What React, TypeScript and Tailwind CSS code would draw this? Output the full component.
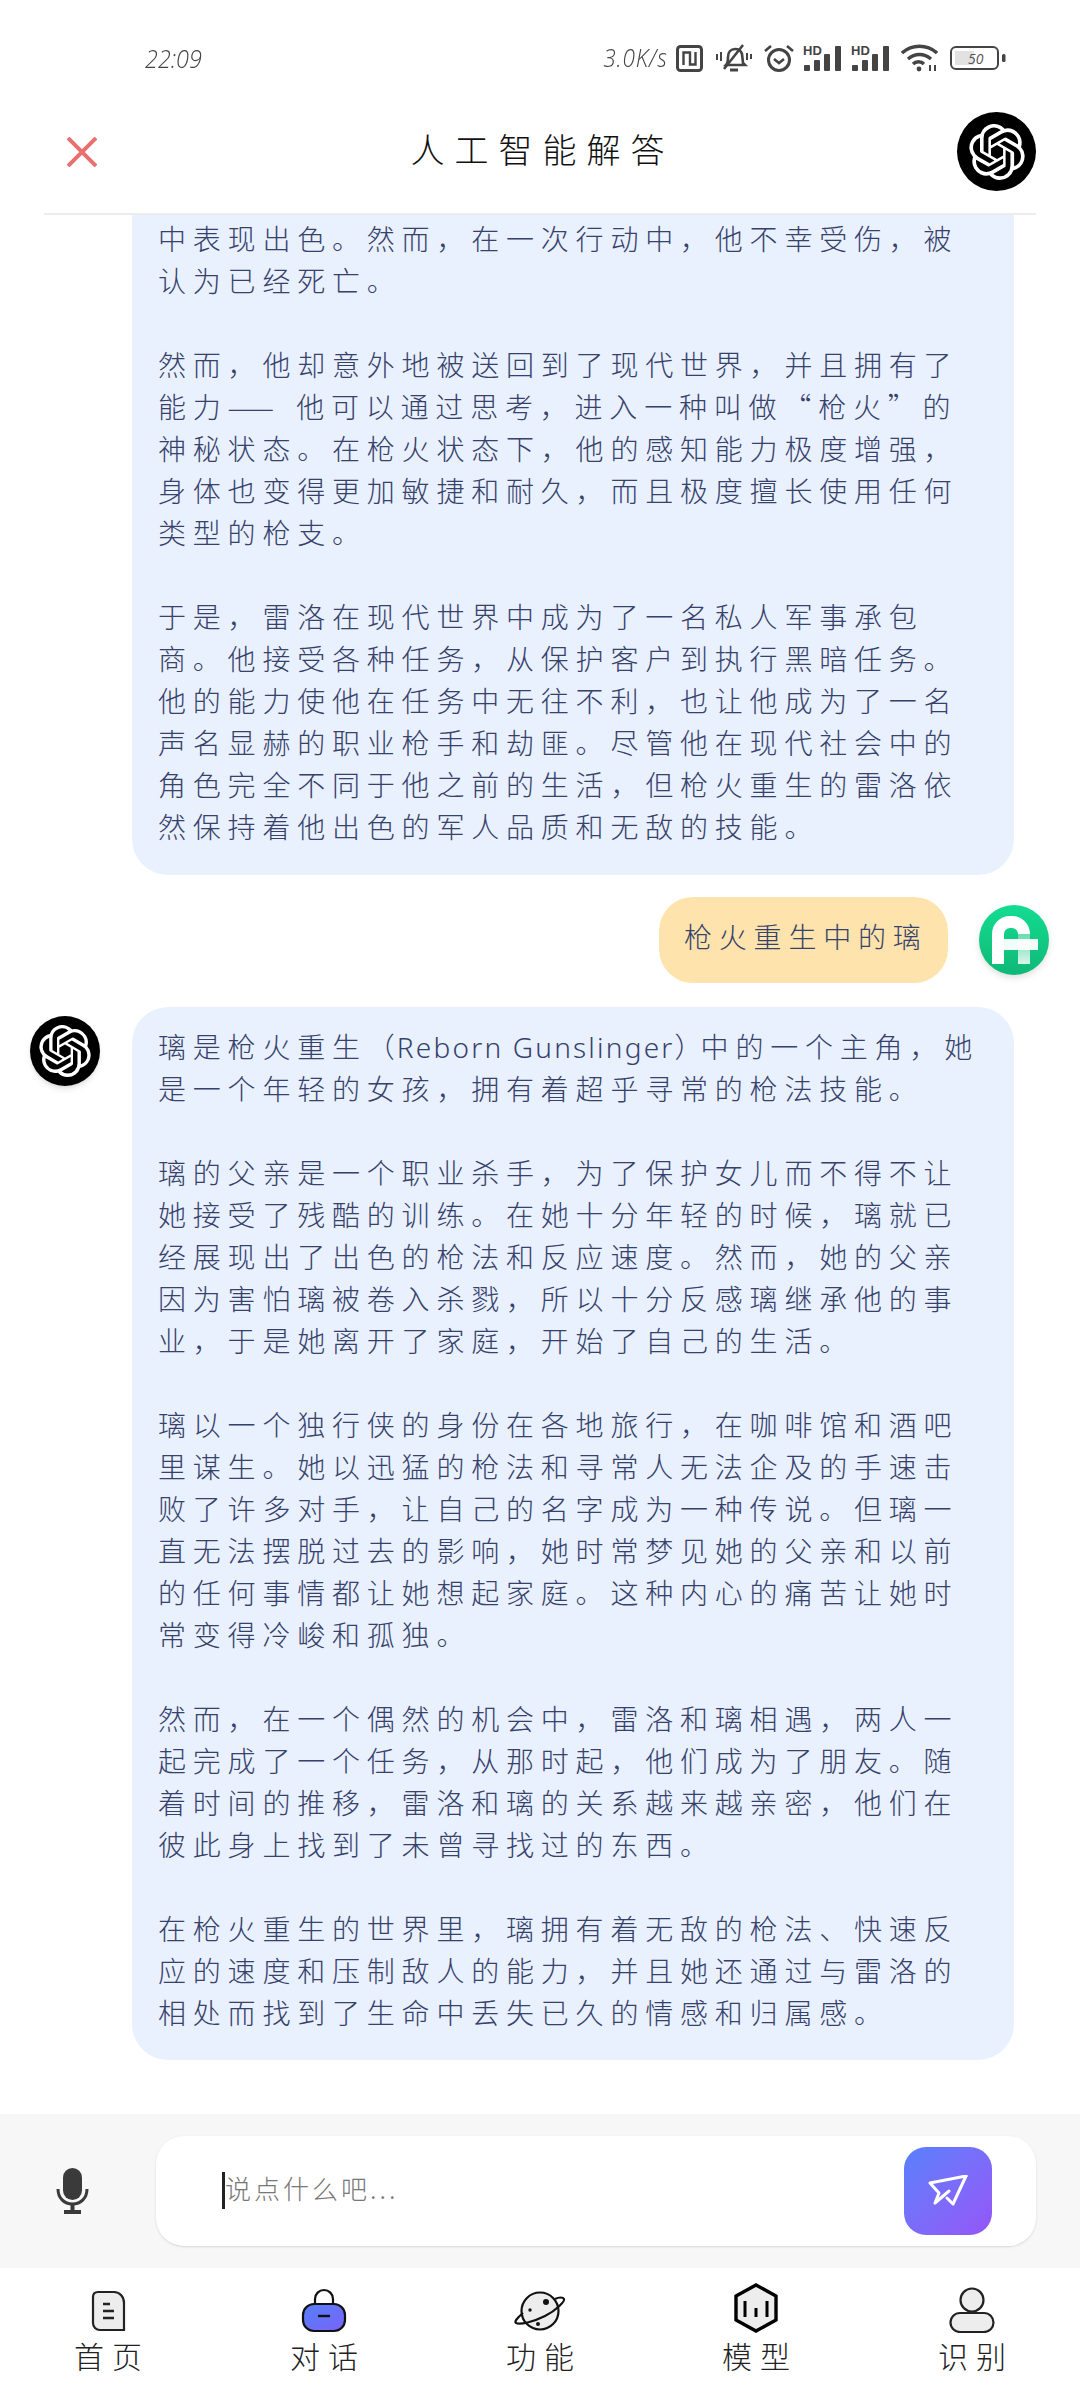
import React from "react";
import { SiOpenai } from "react-icons/si";

const cjk = "font-['Noto_Sans_CJK_SC','Noto_Sans',sans-serif]";

const topLines: React.ReactNode[] = [
  "中表现出色。然而，在一次行动中，他不幸受伤，被",
  "认为已经死亡。",
  "",
  "然而，他却意外地被送回到了现代世界，并且拥有了",
  <>能力<span className="tracking-[22px]">——</span>他可以通过思考，进入一种叫做“枪火”的</>,
  "神秘状态。在枪火状态下，他的感知能力极度增强，",
  "身体也变得更加敏捷和耐久，而且极度擅长使用任何",
  "类型的枪支。",
  "",
  "于是，雷洛在现代世界中成为了一名私人军事承包",
  "商。他接受各种任务，从保护客户到执行黑暗任务。",
  "他的能力使他在任务中无往不利，也让他成为了一名",
  "声名显赫的职业枪手和劫匪。尽管他在现代社会中的",
  "角色完全不同于他之前的生活，但枪火重生的雷洛依",
  "然保持着他出色的军人品质和无敌的技能。",
];

const answerLines: React.ReactNode[] = [
  <>璃是枪火重生<span className="tracking-[2px]">（</span><span className="font-['Noto_Sans',sans-serif] tracking-[2.2px]">Reborn Gunslinger</span><span className="tracking-[-2px]">）</span>中的一个主角，她</>,
  "是一个年轻的女孩，拥有着超乎寻常的枪法技能。",
  "",
  "璃的父亲是一个职业杀手，为了保护女儿而不得不让",
  "她接受了残酷的训练。在她十分年轻的时候，璃就已",
  "经展现出了出色的枪法和反应速度。然而，她的父亲",
  "因为害怕璃被卷入杀戮，所以十分反感璃继承他的事",
  "业，于是她离开了家庭，开始了自己的生活。",
  "",
  "璃以一个独行侠的身份在各地旅行，在咖啡馆和酒吧",
  "里谋生。她以迅猛的枪法和寻常人无法企及的手速击",
  "败了许多对手，让自己的名字成为一种传说。但璃一",
  "直无法摆脱过去的影响，她时常梦见她的父亲和以前",
  "的任何事情都让她想起家庭。这种内心的痛苦让她时",
  "常变得冷峻和孤独。",
  "",
  "然而，在一个偶然的机会中，雷洛和璃相遇，两人一",
  "起完成了一个任务，从那时起，他们成为了朋友。随",
  "着时间的推移，雷洛和璃的关系越来越亲密，他们在",
  "彼此身上找到了未曾寻找过的东西。",
  "",
  "在枪火重生的世界里，璃拥有着无敌的枪法、快速反",
  "应的速度和压制敌人的能力，并且她还通过与雷洛的",
  "相处而找到了生命中丢失已久的情感和归属感。",
];

function Lines({ lines }: { lines: React.ReactNode[] }) {
  return (
    <>
      {lines.map((line, i) => (
        <div key={i} className="h-[42px] whitespace-pre text-[28px] leading-[42px] font-light tracking-[6.8px] text-[#36426b]">
          {line}
        </div>
      ))}
    </>
  );
}

function Signal() {
  return (
    <svg width="40" height="28" viewBox="0 0 40 28" fill="#444">
      <text x="0" y="11" fontSize="13" fontWeight="700" fontFamily="Liberation Sans, sans-serif">HD</text>
      <rect x="1" y="21" width="6" height="6" rx="1" />
      <rect x="11" y="16" width="6" height="11" rx="1" />
      <rect x="21" y="10" width="6" height="17" rx="1" />
      <rect x="32" y="2" width="6" height="25" rx="1" />
    </svg>
  );
}

function StatusBar() {
  return (
    <div className="flex h-[90px] items-center justify-between pt-[26px] pr-[74px] pl-[145px] text-[#444]">
      <span className="origin-left scale-x-[0.9] font-['Open_Sans',sans-serif] text-[26px] font-light italic">22:09</span>
      <div className="flex items-center">
        <span className="mr-[8px] origin-right scale-x-[0.9] font-['Open_Sans',sans-serif] text-[25px] font-light tracking-[1px] whitespace-nowrap italic">3.0K/s</span>
        <svg width="27" height="27" viewBox="0 0 27 27" fill="none" stroke="#444" strokeWidth="3">
          <rect x="1.5" y="1.5" width="24" height="24" rx="3" />
          <path d="M7.5 20V7.5h6.5v12h5.5V7" strokeWidth="2.4" />
        </svg>
        <svg className="ml-[13px]" width="36" height="28" viewBox="0 0 36 28" fill="none" stroke="#444" strokeWidth="2.6">
          <path d="M10 21c2-2 2-4 2-8 0-5 3-8 7-8s6 2 7 5l1 9 2 2H10Z" />
          <path d="M8 25 27 1" />
          <path d="M14 26h8" strokeWidth="3" />
          <path d="M1 10v6M5 8v9M31 9v7M35 10v5" strokeWidth="2" />
        </svg>
        <svg className="ml-[11px]" width="32" height="28" viewBox="0 0 32 28" fill="none" stroke="#444" strokeWidth="3">
          <circle cx="16" cy="16" r="10.5" />
          <path d="M11 15l5 4 5-4" strokeWidth="2.6" />
          <path d="M2 7l6-5M30 7l-6-5" strokeWidth="2.6" />
        </svg>
        <div className="ml-[8px]"><Signal /></div>
        <div className="ml-[8px]"><Signal /></div>
        <svg className="ml-[10px]" width="37" height="28" viewBox="0 0 37 28" fill="none" stroke="#444" strokeWidth="3.4">
          <path d="M1 9c10-9 25-9 35 0" />
          <path d="M7 15c7-6 16-6 23 0" />
          <path d="M12 20c3-3 8-3 11 0" />
          <circle cx="18" cy="25" r="2.4" fill="#444" stroke="none" />
          <path d="M29 21v6M34 21v6" strokeWidth="2" />
        </svg>
        <svg className="ml-[12px]" width="56" height="26" viewBox="0 0 56 26" fill="none">
          <rect x="1" y="2" width="47" height="22" rx="5" stroke="#444" strokeWidth="2" />
          <rect x="5" y="6" width="19" height="14" fill="#e2e2e2" />
          <text x="18" y="19" fontSize="14" fontStyle="italic" fill="#555" fontFamily="Open Sans, sans-serif">50</text>
          <rect x="52" y="9" width="3.5" height="8" rx="1.5" fill="#444" />
        </svg>
      </div>
    </div>
  );
}

function Header() {
  return (
    <div className="mx-[44px] flex h-[125px] items-center justify-between border-b-2 border-[#ececec] pl-[23px]">
      <svg width="30" height="30" viewBox="0 0 30 30" fill="none" stroke="#ea6f6f" strokeWidth="4">
        <path d="M1 1l28 28M29 1 1 29" />
      </svg>
      <div className={`${cjk} ml-[31px] mt-[-6px] text-[34px] font-light tracking-[10px] text-[#111]`}>人工智能解答</div>
      <div className="flex h-[79px] w-[79px] items-center justify-center rounded-full bg-black">
        <SiOpenai className="text-white" size={56} />
      </div>
    </div>
  );
}

function UserAvatar() {
  return (
    <svg className="drop-shadow-md" width="70" height="70" viewBox="0 0 70 70">
      <defs>
        <linearGradient id="green" x1="0" y1="0" x2="0" y2="1">
          <stop offset="0" stopColor="#14dc92" />
          <stop offset="1" stopColor="#0fb877" />
        </linearGradient>
        <linearGradient id="leg" x1="0" y1="0" x2="0" y2="1">
          <stop offset="0" stopColor="#ffffff" stopOpacity="0.35" />
          <stop offset="1" stopColor="#ffffff" stopOpacity="0.85" />
        </linearGradient>
      </defs>
      <circle cx="35" cy="35" r="35" fill="url(#green)" />
      <path d="M19 59V29a12 12 0 0 1 12-12h2a12 12 0 0 1 12 12" fill="none" stroke="#fff" strokeWidth="12" />
      <rect x="39" y="29" width="12" height="30" fill="url(#leg)" />
      <rect x="24" y="34" width="35" height="11" fill="#fff" fillOpacity="0.95" />
    </svg>
  );
}

function Chat() {
  return (
    <div className={`${cjk} flex-1 overflow-hidden`}>
      <div className="mt-[-40px] ml-[132px] w-[882px] rounded-[36px] bg-[#e9f0fe] pt-[42px] pr-[20px] pb-[28px] pl-[26px]">
        <Lines lines={topLines} />
      </div>
      <div className="mt-[22px] flex items-center justify-end pr-[31px]">
        <div className="flex h-[86px] w-[289px] items-center rounded-[34px] bg-[#fee4ac] pb-[8px] pl-[25px]">
          <span className="text-[28px] font-light tracking-[6.8px] whitespace-nowrap text-[#36426b]">枪火重生中的璃</span>
        </div>
        <div className="ml-[31px]"><UserAvatar /></div>
      </div>
      <div className="mt-[24px] flex items-start pl-[30px]">
        <div className="mt-[9px] mr-[32px] flex h-[70px] w-[70px] shrink-0 items-center justify-center rounded-full bg-black shadow-md">
          <SiOpenai className="text-white" size={52} />
        </div>
        <div className="w-[882px] rounded-[36px] bg-[#e9f0fe] pt-[18px] pr-[20px] pb-[27px] pl-[26px]">
          <Lines lines={answerLines} />
        </div>
      </div>
    </div>
  );
}

function InputBar() {
  return (
    <div className="flex h-[154px] items-center bg-[#f7f7f7] pr-[44px] pl-[56px]">
      <svg width="33" height="46" viewBox="0 0 33 46" fill="none">
        <rect x="7" y="0" width="19" height="32" rx="9.5" fill="#3a3a3a" />
        <path d="M2 21c0 9 6 15 14.5 15S31 30 31 21" stroke="#3a3a3a" strokeWidth="3" />
        <path d="M16.5 36v7M8 44h17" stroke="#3a3a3a" strokeWidth="4" />
      </svg>
      <div className="ml-[67px] flex h-[110px] flex-1 items-center rounded-[28px] bg-white pr-[44px] pl-[66px] shadow-sm">
        <div className="mt-[-2px] h-[37px] w-[3px] bg-[#222]" />
        <div className={`${cjk} mt-[-8px] flex-1 text-[26px] font-light tracking-[3px] text-[#777]`}>说点什么吧...</div>
        <button className="flex h-[88px] w-[88px] items-center justify-center rounded-[22px] bg-gradient-to-br from-[#5580fc] to-[#9455f8]">
          <svg width="40" height="32" viewBox="0 0 40 32" fill="none" stroke="#fff" strokeWidth="3" strokeLinejoin="round" strokeLinecap="round">
            <path d="M38 1 2 8l9 10-4 10 14-12" />
            <path d="M38 1 25 29l-6-6" />
          </svg>
        </button>
      </div>
    </div>
  );
}

const navItems: { label: string; icon: React.ReactNode }[] = [
  {
    label: "首页",
    icon: (
      <svg width="36" height="44" viewBox="0 0 36 44" fill="none">
        <path d="M8 3h16c6 0 10 5 10 11v27H10c-4 0-7-3-7-7V8c0-3 2-5 5-5Z" fill="#ededed" stroke="#222" strokeWidth="2.2" />
        <path d="M13 15h7M13 22h11M13 29h11" stroke="#222" strokeWidth="2.4" />
      </svg>
    ),
  },
  {
    label: "对话",
    icon: (
      <svg width="46" height="46" viewBox="0 0 46 46" fill="none">
        <defs>
          <linearGradient id="bag" x1="0" y1="0" x2="1" y2="1">
            <stop offset="0" stopColor="#5580fc" />
            <stop offset="1" stopColor="#7a63f8" />
          </linearGradient>
        </defs>
        <path d="M14 18v-6a9 9 0 0 1 18 0v6" fill="#fff" stroke="#111" strokeWidth="2.2" />
        <rect x="2" y="17" width="42" height="27" rx="11" fill="url(#bag)" stroke="#111" strokeWidth="2.2" />
        <path d="M17 29h12" stroke="#111" strokeWidth="2.4" />
      </svg>
    ),
  },
  {
    label: "功能",
    icon: (
      <svg width="54" height="44" viewBox="0 0 54 44" fill="none" stroke="#111" strokeWidth="2.2">
        <circle cx="27" cy="22" r="18.5" fill="#ededed" />
        <path d="M10 24c-6 5-9 9-7 10 4 2 17-1 29-7S52 12 51 10c-1-2-5-2-9 0" />
        <circle cx="33" cy="13" r="3" fill="#111" stroke="none" />
        <circle cx="17" cy="21" r="1.7" fill="#111" stroke="none" />
        <circle cx="25" cy="35" r="2" fill="#111" stroke="none" />
      </svg>
    ),
  },
  {
    label: "模型",
    icon: (
      <svg width="44" height="50" viewBox="0 0 44 50" fill="none" stroke="#000">
        <path d="M22 2 42 13v24L22 48 2 37V13Z" fill="#ededed" strokeWidth="3.4" />
        <path d="M11 18v16M22 25v9M33 18v16" strokeWidth="3" />
      </svg>
    ),
  },
  {
    label: "识别",
    icon: (
      <svg width="46" height="46" viewBox="0 0 46 46" fill="none" stroke="#222" strokeWidth="2.2">
        <circle cx="23" cy="13" r="11.5" fill="#ededed" />
        <rect x="1.5" y="26" width="43" height="19" rx="9.5" fill="#ededed" />
      </svg>
    ),
  },
];

function BottomNav() {
  return (
    <div className={`${cjk} grid h-[132px] grid-cols-5 bg-white`}>
      {navItems.map((item) => (
        <div key={item.label} className="flex flex-col items-center">
          <div className="flex h-[70px] items-end pb-[5px]">{item.icon}</div>
          <span className="ml-[8px] text-[30px] leading-[34px] font-light tracking-[8px] text-[#222]">{item.label}</span>
        </div>
      ))}
    </div>
  );
}

export default function App() {
  return (
    <div className="flex h-[2400px] w-[1080px] flex-col overflow-hidden bg-white">
      <StatusBar />
      <Header />
      <Chat />
      <InputBar />
      <BottomNav />
    </div>
  );
}
